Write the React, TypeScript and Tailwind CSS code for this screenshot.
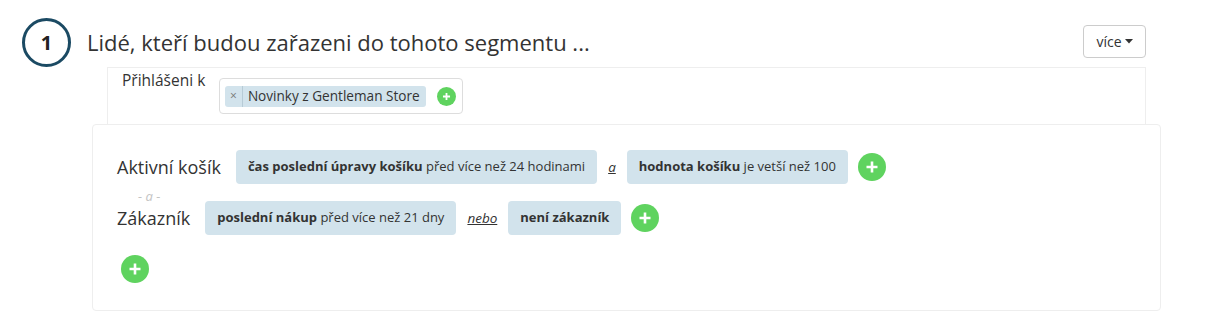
import React from "react";

const font = { fontFamily: '"Open Sans", "Noto Sans", sans-serif' };

function Plus({ size = 28 }: { size?: number }) {
  const big = size > 22;
  return (
    <span
      className={
        big
          ? "flex h-[28px] w-[28px] shrink-0 items-center justify-center rounded-full bg-[#5fd35f]"
          : "flex h-[19px] w-[19px] shrink-0 items-center justify-center rounded-full bg-[#5fd35f]"
      }
    >
      <svg width={big ? 14 : 9} height={big ? 14 : 9} viewBox="0 0 14 14">
        <path d="M7 1.5v11M1.5 7h11" stroke="#fff" strokeWidth={big ? 2.6 : 2.8} strokeLinecap="butt" />
      </svg>
    </span>
  );
}

function Chip({ bold, rest }: { bold: string; rest?: string }) {
  return (
    <span className="flex h-[34px] shrink-0 items-center whitespace-nowrap rounded-[4px] bg-[#d2e3ec] px-[12px] text-[13px] text-[#333]">
      <b className="font-bold">{bold}</b>
      {rest ? <span>&nbsp;{rest}</span> : null}
    </span>
  );
}

function Conj({ t }: { t: string }) {
  return <span className="mx-[11px] text-[13.5px] italic text-[#333] underline">{t}</span>;
}

export default function App() {
  return (
    <div className="bg-white w-[1232px] h-[326px] pl-[22px] pt-[18px]" style={font}>
      <div className="w-[1124px]">
        <div className="flex items-start">
          <div className="flex h-[49px] w-[49px] shrink-0 items-center justify-center rounded-full border-[3px] border-[#1b4a63] text-[20px] font-bold text-[#222]">
            1
          </div>
          <div className="ml-[16px] mt-[9px] text-[22px] leading-[30px] text-[#333]">
            Lidé, kteří budou zařazeni do tohoto segmentu ...
          </div>
          <div className="ml-auto mt-[7px] flex h-[33px] w-[63px] items-center justify-center rounded-[4px] border border-[#ccc] text-[14px] text-[#333]">
            více
            <svg className="ml-[3px]" width="8" height="5" viewBox="0 0 8 5">
              <path d="M0 0h8L4 4.5z" fill="#333" />
            </svg>
          </div>
        </div>
        <div className="ml-[85px] flex h-[57px] items-start border-l border-r border-t border-[#eee] pl-[14px]">
          <span className="mt-[1px] w-[97px] shrink-0 text-[15.5px] leading-[22px] text-[#333]">Přihlášeni k</span>
          <div className="mt-[10px] flex h-[36px] items-center whitespace-nowrap rounded-[4px] border border-[#ddd] pl-[5px] pr-[6px]">
            <span className="flex h-[21px] items-center rounded-[3px] bg-[#d2e3ec] text-[13.6px] text-[#333]">
              <span className="px-[5px] text-[12px] text-[#777]">×</span>
              <span className="h-full border-l border-[#b7cbd6]" />
              <span className="pl-[5px] pr-[6px]">Novinky z Gentleman Store</span>
            </span>
            <span className="ml-[11px]">
              <Plus size={19} />
            </span>
          </div>
        </div>
        <div className="ml-[70px] h-[187px] w-[1069px] rounded-[4px] border border-[#eee] pl-[24px] pt-[25px]">
          <div className="flex items-center">
            <span className="text-[18px] text-[#333]">Aktivní košík</span>
            <span className="ml-[15px]" />
            <Chip bold="čas poslední úpravy košíku" rest="před více než 24 hodinami" />
            <Conj t="a" />
            <Chip bold="hodnota košíku" rest="je vetší než 100" />
            <span className="ml-[10px]">
              <Plus />
            </span>
          </div>
          <div className="h-[17px] pl-[21px] pt-[4px] text-[13px] italic leading-[17px] text-[#c4c4c4]">- a -</div>
          <div className="flex items-center">
            <span className="text-[18px] text-[#333]">Zákazník</span>
            <span className="ml-[15px]" />
            <Chip bold="poslední nákup" rest="před více než 21 dny" />
            <Conj t="nebo" />
            <Chip bold="není zákazník" />
            <span className="ml-[10px]">
              <Plus />
            </span>
          </div>
          <div className="ml-[4px] mt-[20px]">
            <Plus />
          </div>
        </div>
      </div>
    </div>
  );
}
